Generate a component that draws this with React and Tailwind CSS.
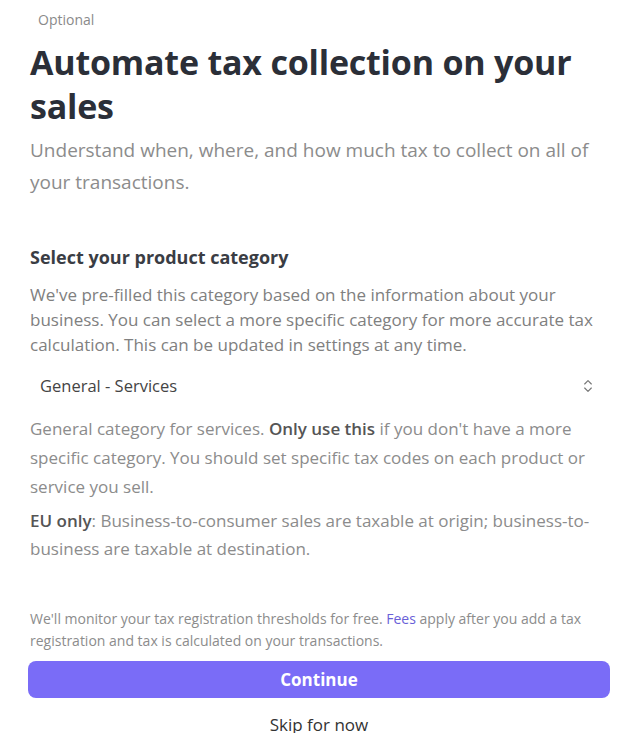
import { ChevronsUpDown } from 'lucide-react';

export default function App() {
  return (
    <div className="w-[638px] h-[733px] overflow-hidden bg-white font-['Open_Sans',sans-serif]">
      <div className="px-[30px]">
        <div className="pt-[9px] pl-[8px] text-[14px] leading-[22px] text-[#8a8a8a]">Optional</div>

        <h1 className="mt-[9px] text-[34px] leading-[44px] font-bold text-[#2b2f38] tracking-[-0.2px]">
          Automate tax collection on your sales
        </h1>
        <p className="mt-[6px] text-[19px] leading-[32px] text-[#8c8c8c]">
          Understand when, where, and how much tax to collect on all of your transactions.
        </p>

        <h2 className="mt-[46px] text-[18px] leading-[26px] font-bold text-[#3a3d44]">
          Select your product category
        </h2>
        <p className="mt-[12px] text-[17px] leading-[25px] text-[#808080]">
          We've pre-filled this category based on the information about your business. You can select a more specific category for more accurate tax calculation. This can be updated in settings at any time.
        </p>

        <div className="mt-[14px] flex items-center justify-between pl-[10px] pr-[12px] h-[30px] text-[16.5px] text-[#444]">
          <span>General - Services</span>
          <ChevronsUpDown size={16} strokeWidth={1.75} className="text-[#777]" />
        </div>

        <p className="mt-[13px] text-[17px] leading-[29px] text-[#8c8c8c]">
          General category for services. <span className="font-semibold text-[#555]">Only use this</span> if you don't have a more specific category. You should set specific tax codes on each product or service you sell.
        </p>
        <p className="mt-[6px] text-[17px] leading-[28px] text-[#8c8c8c]">
          <span className="font-semibold text-[#555]">EU only</span>: Business-to-consumer sales are taxable at origin; business-to-business are taxable at destination.
        </p>

        <p className="mt-[45px] text-[14px] leading-[22px] text-[#8c8c8c]">
          We'll monitor your tax registration thresholds for free. <span className="text-[#6a5fd8]">Fees</span> apply after you add a tax registration and tax is calculated on your transactions.
        </p>
      </div>

      <div className="px-[28px] mt-[9px]">
        <button className="w-full h-[37px] rounded-[8px] bg-[#7a6cf7] text-white text-[17px] font-bold">
          Continue
        </button>
      </div>
      <div className="mt-[15px] text-center text-[17px] leading-[24px] text-[#333]">Skip for now</div>
    </div>
  );
}
